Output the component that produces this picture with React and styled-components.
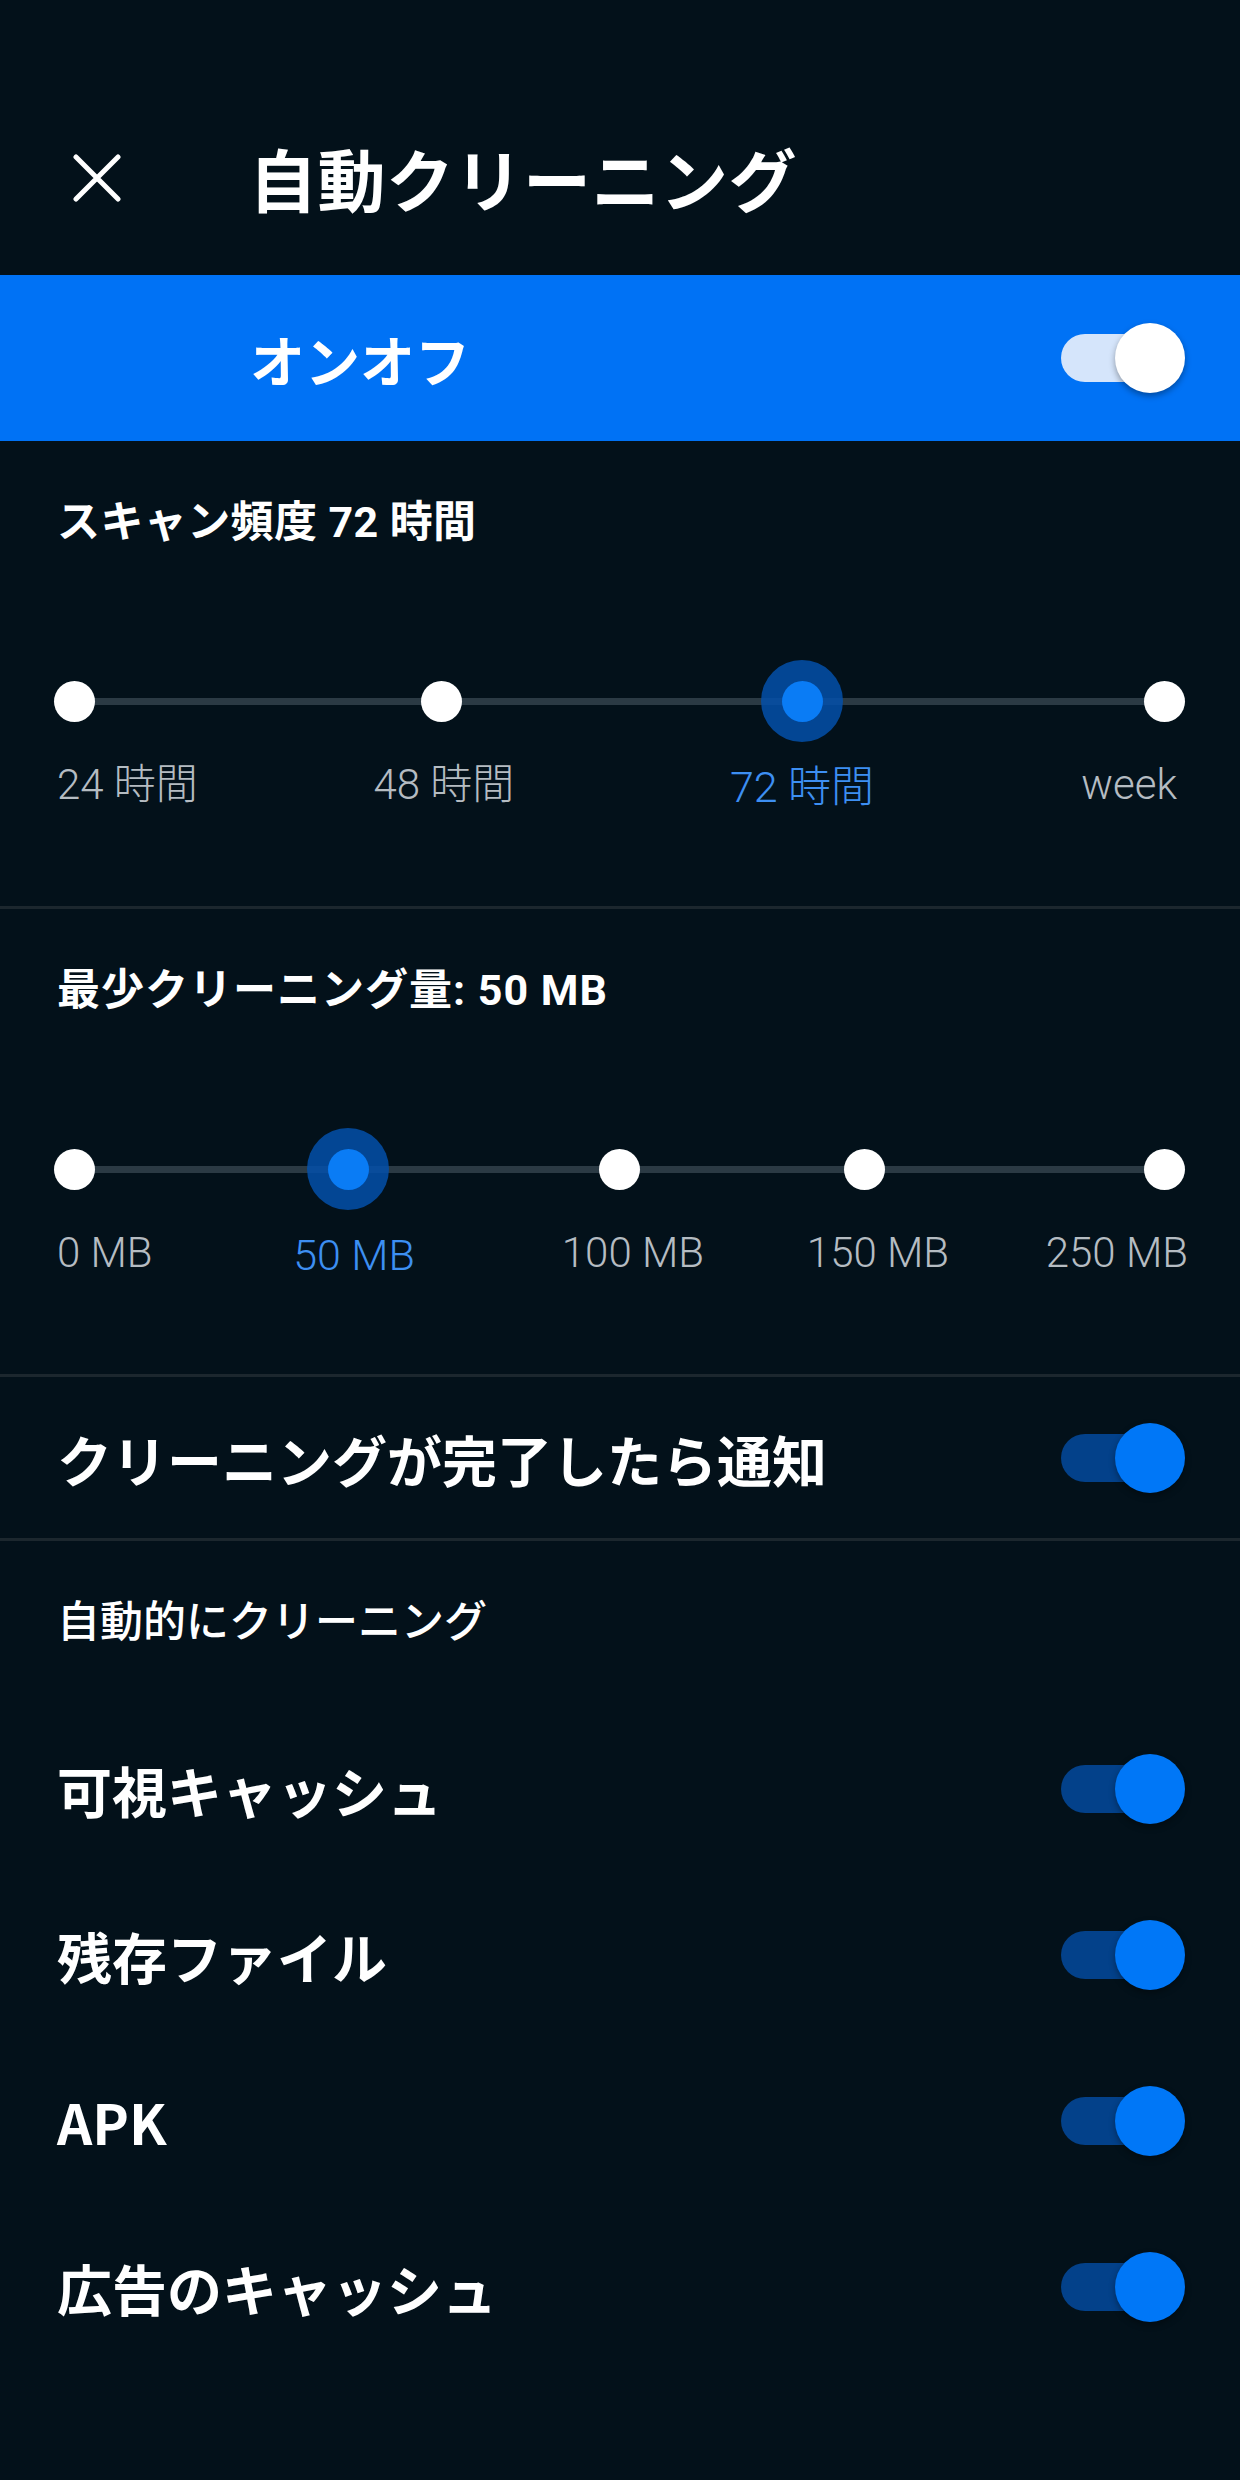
import styled, { createGlobalStyle } from 'styled-components';

const GlobalStyle = createGlobalStyle`
  * { box-sizing: border-box; }
  html, body { margin: 0; padding: 0; background: #03111a; }
  body {
    font-family: "Noto Sans CJK JP", "Noto Sans", sans-serif;
    color: #fff;
  }
`;

const Screen = styled.div`
  width: 1240px;
  min-height: 2480px;
  background: #03111a;
`;

const Header = styled.header`
  height: 275px;
  padding: 80px 0 0 73px;
  display: flex;
  align-items: center;
  gap: 128px;
`;

const CloseButton = styled.button`
  width: 48px;
  height: 48px;
  padding: 0;
  border: none;
  background: none;
  display: flex;
  align-items: center;
  justify-content: center;
  cursor: pointer;
`;

const Title = styled.h1`
  margin: 0;
  font-size: 68px;
  font-weight: 700;
  line-height: 1.2;
  letter-spacing: 0.5px;
`;

const MasterBar = styled.div`
  height: 166px;
  background: #0072f5;
  display: flex;
  align-items: center;
  justify-content: space-between;
  padding: 0 55px 0 250px;
`;

const RowLabel = styled.span`
  font-size: 55px;
  font-weight: 700;
  line-height: 1.2;
`;

const SwitchBox = styled.div`
  position: relative;
  width: 124px;
  height: 70px;
  flex-shrink: 0;
`;

const Track = styled.div`
  position: absolute;
  left: 0;
  top: 11px;
  width: 110px;
  height: 48px;
  border-radius: 24px;
  background: ${(p) => (p.$light ? '#d5e5fb' : '#03418a')};
`;

const Thumb = styled.div`
  position: absolute;
  right: 0;
  top: 0;
  width: 70px;
  height: 70px;
  border-radius: 50%;
  background: ${(p) => (p.$light ? '#ffffff' : '#0077f7')};
  box-shadow: 0 3px 6px rgba(0, 0, 0, 0.35);
`;

const Section = styled.section`
  padding: 57px 56px 97px 57px;
  border-bottom: 3px solid #1c272e;
`;

const SectionHead = styled.h2`
  margin: 0;
  font-size: 43px;
  font-weight: ${(p) => p.$weight || 700};
  line-height: 48px;
  letter-spacing: ${(p) => p.$spacing || 0}px;
  font-family: "Roboto", "Noto Sans CJK JP", sans-serif;
`;

const SliderWrap = styled.div`
  margin: 114px 0 0 -3px;
  height: 82px;
  padding: 0 20px;
`;

const SliderInner = styled.div`
  position: relative;
  height: 100%;
`;

const Rail = styled.div`
  position: absolute;
  left: 0;
  right: 0;
  top: 38px;
  height: 7px;
  background: #2b3a44;
`;

const Halo = styled.div`
  position: absolute;
  top: 0;
  width: 82px;
  height: 82px;
  margin-left: -41px;
  border-radius: 50%;
  background: rgba(3, 80, 170, 0.85);
`;

const Dot = styled.div`
  position: absolute;
  top: 21px;
  width: 41px;
  height: 41px;
  margin-left: -20.5px;
  border-radius: 50%;
  background: ${(p) => (p.$active ? '#0a7cf5' : '#ffffff')};
`;

const LabelRow = styled.div`
  position: relative;
  height: 48px;
  margin: 19px 20px 0 17px;
`;

const Tick = styled.span`
  position: absolute;
  top: ${(p) => (p.$active ? 2 : 0)}px;
  white-space: nowrap;
  font-family: "Roboto", "Noto Sans CJK JP", sans-serif;
  font-size: ${(p) => (p.$active ? 43 : 42)}px;
  font-weight: 300;
  line-height: 48px;
  color: ${(p) => (p.$active ? '#3d8ff2' : '#b5bcc2')};
  transform: translateX(${(p) => (p.$align === 'start' ? '0' : p.$align === 'end' ? '-100%' : '-50%')});
`;

const ToggleRow = styled.div`
  display: flex;
  align-items: center;
  justify-content: space-between;
  height: ${(p) => p.$h || 166}px;
  padding: 0 55px 0 57px;
`;

const NotifyBlock = styled.div`
  border-bottom: 3px solid #1c272e;
`;

const AutoBlock = styled.section`
  padding-top: 57px;
`;

const AutoHead = styled.div`
  padding: 0 57px 60px;
`;

function Switch({ light }) {
  return (
    <SwitchBox>
      <Track $light={light} />
      <Thumb $light={light} />
    </SwitchBox>
  );
}

function StepSlider({ marks, active, endOffset }) {
  return (
    <>
      <SliderWrap>
        <SliderInner>
          <Rail />
          {marks.map((m, i) =>
            i === active ? (
              <Halo key={'h' + i} style={{ left: `${m.pos * 100}%` }} />
            ) : null
          )}
          {marks.map((m, i) => (
            <Dot key={i} $active={i === active} style={{ left: `${m.pos * 100}%` }} />
          ))}
        </SliderInner>
      </SliderWrap>
      <LabelRow>
        {marks.map((m, i) => {
          const first = i === 0;
          const last = i === marks.length - 1;
          const align = first ? 'start' : last ? 'end' : 'center';
          const left = first
            ? 'calc(0% - 17px)'
            : last
            ? `calc(100% + ${endOffset}px)`
            : `${m.label * 100}%`;
          return (
            <Tick key={i} $align={align} $active={i === active} style={{ left }}>
              {m.text}
            </Tick>
          );
        })}
      </LabelRow>
    </>
  );
}

const hours = [
  { pos: 0, text: '24 時間' },
  { pos: 0.3367, label: 0.3394, text: '48 時間' },
  { pos: 0.6679, label: 0.6679, text: '72 時間' },
  { pos: 1, text: 'week' },
];

const sizes = [
  { pos: 0, text: '0 MB' },
  { pos: 0.2514, label: 0.2569, text: '50 MB' },
  { pos: 0.5009, label: 0.5128, text: '100 MB' },
  { pos: 0.7248, label: 0.7376, text: '150 MB' },
  { pos: 1, text: '250 MB' },
];

const autoItems = ['可視キャッシュ', '残存ファイル', 'APK', '広告のキャッシュ'];

export default function App() {
  return (
    <Screen>
      <GlobalStyle />
      <Header>
        <CloseButton aria-label="close">
          <svg width="48" height="48" viewBox="0 0 48 48">
            <path d="M3 3 L45 45 M45 3 L3 45" stroke="#fff" strokeWidth="5" strokeLinecap="round" />
          </svg>
        </CloseButton>
        <Title>自動クリーニング</Title>
      </Header>

      <MasterBar>
        <RowLabel>オンオフ</RowLabel>
        <Switch light />
      </MasterBar>

      <Section>
        <SectionHead $spacing={0.4}>スキャン頻度 72 時間</SectionHead>
        <StepSlider marks={hours} active={2} endOffset={13} />
      </Section>

      <Section>
        <SectionHead $spacing={1}>最少クリーニング量: 50 MB</SectionHead>
        <StepSlider marks={sizes} active={1} endOffset={24} />
      </Section>

      <NotifyBlock>
        <ToggleRow $h={161}>
          <RowLabel>クリーニングが完了したら通知</RowLabel>
          <Switch />
        </ToggleRow>
      </NotifyBlock>

      <AutoBlock>
        <AutoHead>
          <SectionHead $weight={500}>自動的にクリーニング</SectionHead>
        </AutoHead>
        {autoItems.map((item) => (
          <ToggleRow key={item}>
            <RowLabel>{item}</RowLabel>
            <Switch />
          </ToggleRow>
        ))}
      </AutoBlock>
    </Screen>
  );
}
